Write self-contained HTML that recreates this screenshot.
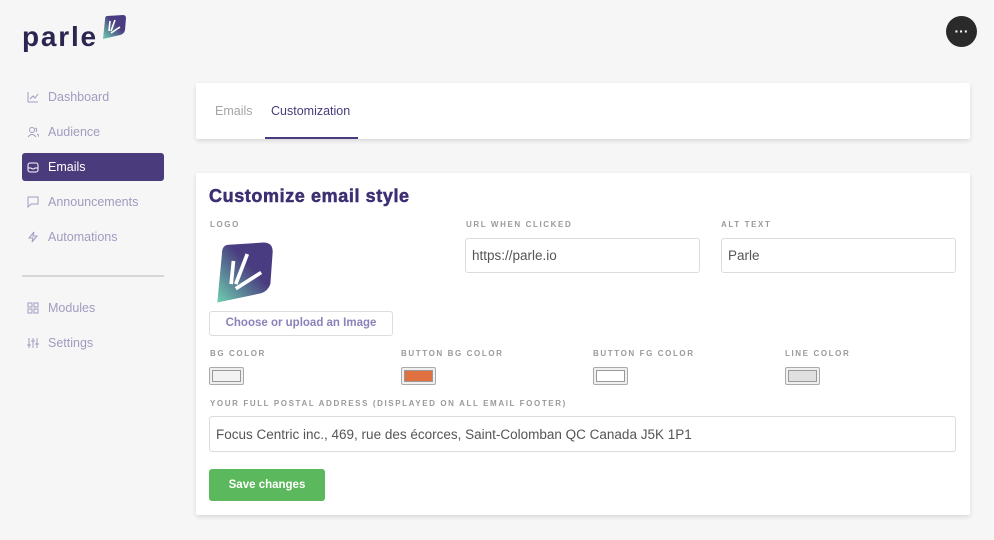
<!DOCTYPE html>
<html><head><meta charset="utf-8"><style>
*{box-sizing:border-box;margin:0;padding:0}
body{width:994px;height:540px;background:#f6f6f6;font-family:"Liberation Sans",sans-serif;position:relative;overflow:hidden}
.a{position:absolute}
.nav{position:absolute;left:22px;width:142px;height:28px;color:#a09cc0;font-size:12.5px;line-height:28px;padding-left:26px}
.nav svg{position:absolute;left:5px;top:8px}
.card{position:absolute;background:#fff;box-shadow:0 2px 5px rgba(0,0,0,.12);border-radius:2px}
.lbl{position:absolute;font-size:8px;font-weight:bold;letter-spacing:1.6px;color:#9a9a9a}
.inp{position:absolute;border:1px solid #dcdcdc;border-radius:3px;background:#fff;font-size:13.5px;color:#555;padding-left:6px;display:flex;align-items:center}
.sw{position:absolute;width:35px;height:18px;border:1.5px solid #aaa;border-radius:2px;background:#f0f0f0;padding:2px}
.sw div{width:100%;height:100%;border:1px solid #999}
</style></head><body>
<div class="a" style="left:22px;top:21px;font-size:28px;font-weight:bold;color:#2b2550;letter-spacing:1.8px">parle</div>
<svg class="a" style="left:101px;top:14px" width="26" height="26" viewBox="0 0 26 26"><defs><linearGradient id="g" x1="0" y1="1" x2="1" y2="0"><stop offset="0" stop-color="#6fd0b0"/><stop offset=".6" stop-color="#4a3c80"/></linearGradient></defs><path d="M6 2 L22 1 Q25 1 25 4 L24 16 Q23 20 19 21 L2 25 L4 6 Q4 2 6 2Z" fill="url(#g)"/><path d="M9 7 L8 17 M14 6 L10 17 M19 13 L10 19" stroke="#fff" stroke-width="1.6"/></svg>
<div class="a" style="left:946px;top:16px;width:31px;height:31px;border-radius:50%;background:#2a2a2a;color:#fff;text-align:center;font-size:14px;line-height:30px;font-weight:bold">···</div>

<div class="nav" style="top:83px"><svg width="12" height="12" fill="none" stroke="#a09cc0"><path d="M1 1V11H11M3 8L6 5 8 7 11 3"/></svg>Dashboard</div>
<div class="nav" style="top:118px"><svg width="12" height="12" fill="none" stroke="#a09cc0"><circle cx="5" cy="4" r="2.5"/><path d="M1 11Q5 6 9 11M8 2Q11 3 9 6M10 8Q12 9 12 11"/></svg>Audience</div>
<div class="nav" style="top:153px;background:#4a3b7c;color:#fff;border-radius:3px"><svg width="12" height="12" fill="none" stroke="#fff"><rect x="1" y="2" width="10" height="9" rx="2"/><path d="M1 7H4Q6 9 8 7H11"/></svg>Emails</div>
<div class="nav" style="top:188px"><svg width="12" height="12" fill="none" stroke="#a09cc0"><path d="M1 1H11V8H4L1 11Z"/></svg>Announcements</div>
<div class="nav" style="top:223px"><svg width="12" height="12" fill="none" stroke="#a09cc0"><path d="M7 1L2 7H6L5 11 10 5H6Z"/></svg>Automations</div>
<div class="a" style="left:22px;top:275px;width:142px;height:1.5px;background:#d6d6d6"></div>
<div class="nav" style="top:294px"><svg width="12" height="12" fill="none" stroke="#a09cc0"><rect x="1" y="1" width="4" height="4"/><rect x="7" y="1" width="4" height="4"/><rect x="1" y="7" width="4" height="4"/><rect x="7" y="7" width="4" height="4"/></svg>Modules</div>
<div class="nav" style="top:329px"><svg width="12" height="12" fill="none" stroke="#a09cc0"><path d="M2 1V11M6 1V11M10 1V11M0 8H4M4 4H8M8 7H12"/></svg>Settings</div>

<div class="card" style="left:196px;top:83px;width:774px;height:56px">
<div class="a" style="left:19px;top:21px;font-size:12.5px;color:#a5a5a5">Emails</div>
<div class="a" style="left:75px;top:21px;font-size:12.5px;color:#4a3b7c">Customization</div>
<div class="a" style="left:69px;top:54px;width:93px;height:2px;background:#4a3b7c"></div>
</div>

<div class="card" style="left:196px;top:173px;width:774px;height:342px"></div>
<div class="a" style="left:209px;top:186px;font-size:18px;font-weight:bold;color:#3d2f72;letter-spacing:0.6px;-webkit-text-stroke:0.5px #3d2f72">Customize email style</div>
<div class="lbl" style="left:210px;top:220px">LOGO</div>
<div class="lbl" style="left:466px;top:220px">URL WHEN CLICKED</div>
<div class="lbl" style="left:721px;top:220px">ALT TEXT</div>
<svg class="a" style="left:215px;top:241px" width="60" height="63" viewBox="0 0 26 26"><defs><linearGradient id="g2" x1="0" y1="1" x2="1" y2="0"><stop offset="0" stop-color="#6fd0b0"/><stop offset=".6" stop-color="#4a3c80"/></linearGradient></defs><path d="M6 1 L21 0 Q25 0 25 4 L24 18 Q23 21 20 22 L1 26 L3 5 Q3 1 6 1Z" fill="url(#g2)"/><path d="M8 8 L7 18 M14 5 L9 18 M20 13 L9 20" stroke="#fff" stroke-width="1.6"/></svg>
<div class="inp" style="left:465px;top:238px;width:235px;height:35px">https://parle.io</div>
<div class="inp" style="left:721px;top:238px;width:235px;height:35px">Parle</div>
<div class="a" style="left:209px;top:311px;width:184px;height:25px;border:1px solid #ddd;border-radius:3px;font-size:11.5px;font-weight:bold;color:#8a82b8;text-align:center;line-height:23px">Choose or upload an Image</div>
<div class="lbl" style="left:210px;top:349px">BG COLOR</div>
<div class="lbl" style="left:401px;top:349px">BUTTON BG COLOR</div>
<div class="lbl" style="left:593px;top:349px">BUTTON FG COLOR</div>
<div class="lbl" style="left:785px;top:349px">LINE COLOR</div>
<div class="sw" style="left:209px;top:367px"><div style="background:#f2f2f2"></div></div>
<div class="sw" style="left:401px;top:367px"><div style="background:#e07040"></div></div>
<div class="sw" style="left:593px;top:367px"><div style="background:#fff"></div></div>
<div class="sw" style="left:785px;top:367px"><div style="background:#e0e0e0"></div></div>
<div class="lbl" style="left:210px;top:399px">YOUR FULL POSTAL ADDRESS (DISPLAYED ON ALL EMAIL FOOTER)</div>
<div class="inp" style="left:209px;top:416px;width:747px;height:36px">Focus Centric inc., 469, rue des écorces, Saint-Colomban QC Canada J5K 1P1</div>
<div class="a" style="left:209px;top:469px;width:116px;height:32px;background:#5cb85c;border-radius:3px;color:#fff;font-size:11.5px;font-weight:bold;text-align:center;line-height:32px">Save changes</div>
</body></html>
